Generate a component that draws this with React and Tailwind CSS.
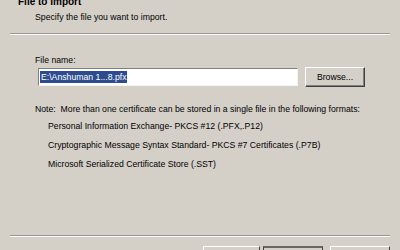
export default function App() {
    // classic wizard page: gray chrome, sunken input, etched separators
    return (
        <div
            className="w-[400px] h-[250px] overflow-hidden bg-[#d4d0c8] text-black text-[8.7px] leading-[11px] flex flex-col"
            style={{ fontFamily: '"Liberation Sans", Arial, sans-serif' }}
        >
            {/* Header */}
            <div className="pl-[18px] -mt-[4px] font-bold text-[10px] leading-[12px]">File to Import</div>
            <div className="pl-[35px] mt-[4px]">Specify the file you want to import.</div>

            <div className="mx-[10px] mt-[10px] border-t border-[#9a978f] border-b border-b-white h-0" />

            {/* Body */}
            <div className="pl-[35px] pt-[20px] flex flex-col">
                <div>File name:</div>
                <div className="flex items-center mt-[1px]">
                    <div className="ml-[3px] w-[260px] h-[18px] bg-white border border-t-[#808080] border-l-[#808080] border-r-[#f4f3ee] border-b-[#f4f3ee] flex items-center px-[1px]">
                        <span className="bg-[#2d4b8f] text-white px-[1px] leading-[12px]">E:\Anshuman 1...8.pfx</span>
                    </div>
                    <button className="ml-[7px] w-[60px] h-[20px] bg-[#d4d0c8] border border-t-white border-l-white border-r-[#404040] border-b-[#404040] shadow-[inset_-1px_-1px_0_#808080] text-center">
                        Browse...
                    </button>
                </div>

                <div className="mt-[17px]">Note:&nbsp; More than one certificate can be stored in a single file in the following formats:</div>
                <div className="pl-[13px] flex flex-col gap-[8px] mt-[6px]">
                    <div>Personal Information Exchange- PKCS #12 (.PFX,.P12)</div>
                    <div>Cryptographic Message Syntax Standard- PKCS #7 Certificates (.P7B)</div>
                    <div>Microsoft Serialized Certificate Store (.SST)</div>
                </div>
            </div>

            <div className="flex-1" />
            <div className="mx-[10px] border-t border-[#9a978f] border-b border-b-white h-0" />

            {/* Footer buttons, cut off by the frame */}
            <div className="flex justify-end pr-[10px] mt-[9px] h-[4px] overflow-visible">
                <div className="w-[57px] h-[20px] border border-t-white border-l-white border-r-[#404040] border-b-[#404040]" />
                <div className="ml-[3px] w-[60px] h-[20px] border-t-2 border-t-[#6b6864] border-x border-[#404040]" />
                <div className="ml-[7px] w-[60px] h-[20px] border border-t-white border-l-white border-r-[#404040] border-b-[#404040]" />
            </div>
        </div>
    );
}
